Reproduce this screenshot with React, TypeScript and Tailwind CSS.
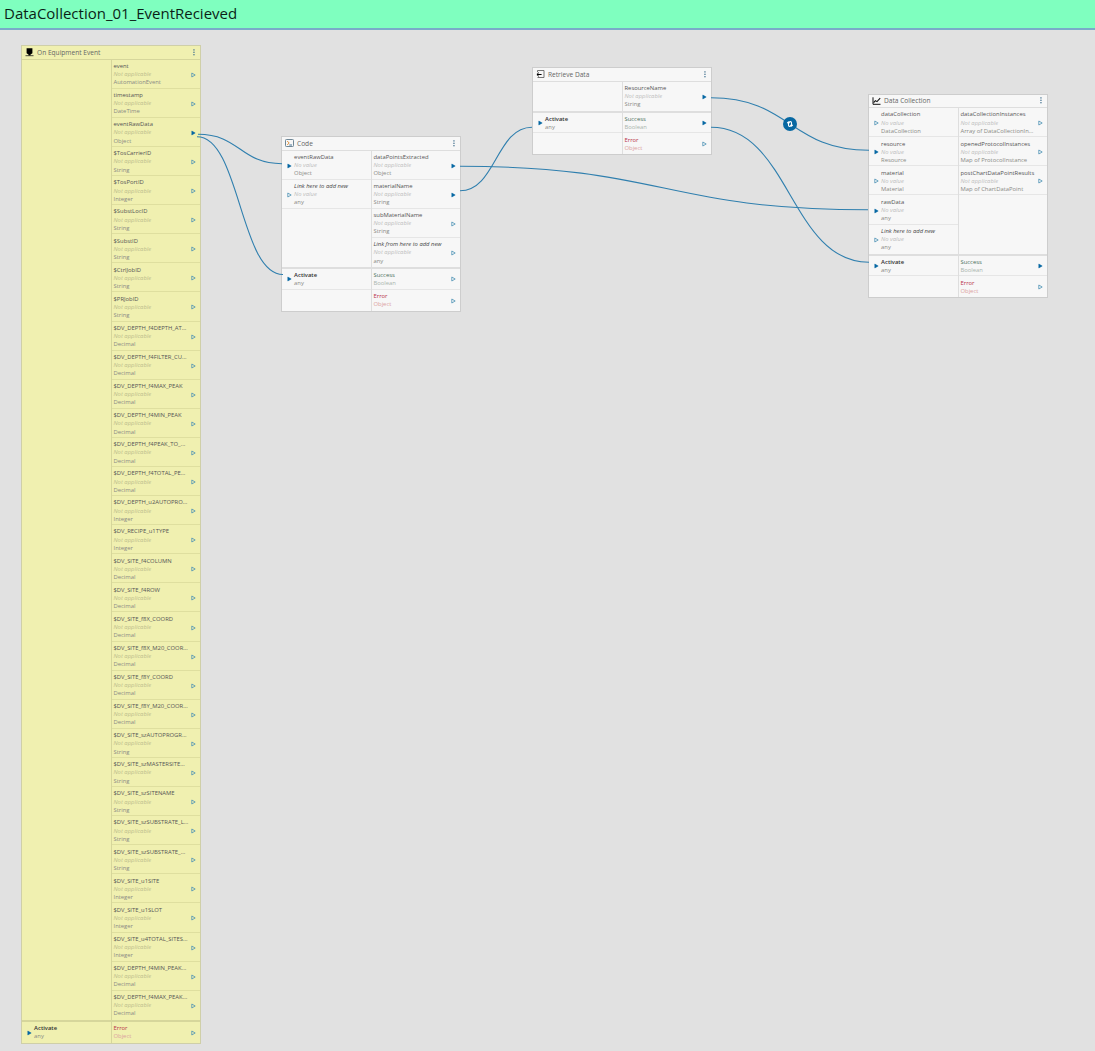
import React from "react";

type Port = { n: string; v?: string; t: string; on?: boolean; kind?: "link" | "act" | "ok" | "err" };
const NA = "Not applicable";

function Arrow({ on }: { on?: boolean }) {
  return (
    <svg width="5" height="6" viewBox="0 0 5 6" className="shrink-0">
      <path d="M0.8 1 L4.2 3 L0.8 5 Z" fill={on ? "#0467a3" : "none"} stroke={on ? "#0467a3" : "#4a90b4"} strokeWidth={on ? 0.5 : 0.8} />
    </svg>
  );
}

function Cell({ p, side, yellow, last, short }: { p: Port; side: "in" | "out"; yellow?: boolean; last?: boolean; short?: boolean }) {
  const line = yellow ? "border-[#dfdf9f]" : "border-[#e6e6e6]";
  const h = short ? "h-[20.8px]" : "h-[29.1px]";
  const kind = p.kind;
  const nameColor =
    kind === "err" ? "text-[#b8354a]" : kind === "ok" ? "text-[#4b6f5c]" : kind === "link" ? "italic text-[#444]" : kind === "act" ? "font-semibold text-[#333]" : "text-[#555]";
  const typeColor = kind === "err" ? "text-[#dba0a0]" : kind === "ok" ? "text-[#a9b5ad]" : "text-[#8a8a85]";
  return (
    <div className={`flex shrink-0 ${h} ${last ? "" : "border-b"} ${line} ${side === "in" ? "pl-[4.8px]" : "pl-[2px] pr-[4px]"}`}>
      {side === "in" && (
        <div className={`flex w-[7.3px] items-center ${short ? "pt-[1px]" : "pt-[2px]"}`}>
          <Arrow on={p.on} />
        </div>
      )}
      <div className="flex min-w-0 flex-1 flex-col whitespace-nowrap pt-[2.3px] text-[5.86px] leading-[8.2px]">
        <span className={nameColor}>{p.n}</span>
        {p.v && <span className={`italic ${yellow ? "text-[#bcbc8c]" : "text-[#bdbdbd]"}`}>{p.v}</span>}
        <span className={typeColor}>{p.t}</span>
      </div>
      {side === "out" && (
        <div className={`flex items-center ${short ? "pt-[1px]" : "pt-[2px]"}`}>
          <Arrow on={p.on} />
        </div>
      )}
    </div>
  );
}

type NodeProps = {
  title: string;
  icon: React.ReactNode;
  place: string;
  ins: Port[];
  outs: Port[];
  act: Port[];
  res: Port[];
  yellow?: boolean;
};

function FlowNode({ title, icon, place, ins, outs, act, res, yellow }: NodeProps) {
  const line = yellow ? "border-[#d6d69b]" : "border-[#dedede]";
  return (
    <section
      className={`absolute flex w-[180px] flex-col border ${place} ${yellow ? "border-[#cfcfa8] bg-[#f0f0b0]" : "border-[#cdcdcd] bg-[#f7f7f7]"}`}
    >
      <header className={`flex h-[13.6px] shrink-0 items-center border-b pl-[3px] pr-[5px] ${line}`}>
        {icon}
        <span className="ml-[3px] flex-1 whitespace-nowrap pt-[1px] text-[6.6px] leading-[10px] text-[#666]">{title}</span>
        <svg width="2" height="7" viewBox="0 0 2 7" fill="#3d6d8c">
          <rect x="0.3" y="0.3" width="1.3" height="1.2" />
          <rect x="0.3" y="2.7" width="1.3" height="1.2" />
          <rect x="0.3" y="5.1" width="1.3" height="1.2" />
        </svg>
      </header>
      <div className="flex">
        <div className={`flex w-[89.5px] flex-col border-r ${line}`}>
          {ins.map((p, i) => (
            <Cell key={i} p={p} side="in" yellow={yellow} last={i === 4} />
          ))}
        </div>
        <div className="flex min-w-0 flex-1 flex-col">
          {outs.map((p, i) => (
            <Cell key={i} p={p} side="out" yellow={yellow} last={i === outs.length - 1 && outs.length >= ins.length} />
          ))}
        </div>
      </div>
      <div className={`flex border-t-2 ${line}`}>
        <div className={`w-[89.5px] border-r ${line}`}>
          {act.map((p, i) => (
            <Cell key={i} p={p} side="in" yellow={yellow} short last={res.length === 1} />
          ))}
        </div>
        <div className="min-w-0 flex-1">
          {res.map((p, i) => (
            <Cell key={i} p={p} side="out" yellow={yellow} short last={i === res.length - 1} />
          ))}
        </div>
      </div>
    </section>
  );
}

const eventPorts: [string, string][] = [
  ["event", "AutomationEvent"],
  ["timestamp", "DateTime"],
  ["eventRawData", "Object"],
  ["$TosCarrierID", "String"],
  ["$TosPortID", "Integer"],
  ["$SubstLocID", "String"],
  ["$SubstID", "String"],
  ["$CtrlJobID", "String"],
  ["$PRJobID", "String"],
  ["$DV_DEPTH_f4DEPTH_AT...", "Decimal"],
  ["$DV_DEPTH_f4FILTER_CU...", "Decimal"],
  ["$DV_DEPTH_f4MAX_PEAK", "Decimal"],
  ["$DV_DEPTH_f4MIN_PEAK", "Decimal"],
  ["$DV_DEPTH_f4PEAK_TO_...", "Decimal"],
  ["$DV_DEPTH_f4TOTAL_PE...", "Decimal"],
  ["$DV_DEPTH_u2AUTOPRO...", "Integer"],
  ["$DV_RECIPE_u1TYPE", "Integer"],
  ["$DV_SITE_f4COLUMN", "Decimal"],
  ["$DV_SITE_f4ROW", "Decimal"],
  ["$DV_SITE_f8X_COORD", "Decimal"],
  ["$DV_SITE_f8X_M20_COOR...", "Decimal"],
  ["$DV_SITE_f8Y_COORD", "Decimal"],
  ["$DV_SITE_f8Y_M20_COOR...", "Decimal"],
  ["$DV_SITE_szAUTOPROGR...", "String"],
  ["$DV_SITE_szMASTERSITE...", "String"],
  ["$DV_SITE_szSITENAME", "String"],
  ["$DV_SITE_szSUBSTRATE_L...", "String"],
  ["$DV_SITE_szSUBSTRATE_...", "String"],
  ["$DV_SITE_u1SITE", "Integer"],
  ["$DV_SITE_u1SLOT", "Integer"],
  ["$DV_SITE_u4TOTAL_SITES...", "Integer"],
  ["$DV_DEPTH_f4MIN_PEAK...", "Decimal"],
  ["$DV_DEPTH_f4MAX_PEAK...", "Decimal"],
];

const out = (n: string, t: string, on?: boolean, kind?: Port["kind"]): Port => ({ n, v: NA, t, on, kind });
const inp = (n: string, t: string, on?: boolean, kind?: Port["kind"]): Port => ({ n, v: "No value", t, on, kind });
const activate: Port[] = [{ n: "Activate", t: "any", on: true, kind: "act" }];
const error: Port = { n: "Error", t: "Object", kind: "err" };
const success = (on?: boolean): Port => ({ n: "Success", t: "Boolean", on, kind: "ok" });

export default function App() {
  return (
    <div className="flex h-[1051px] w-[1095px] flex-col overflow-hidden bg-[#e1e1e1] font-['Open_Sans',sans-serif]">
      <div className="flex h-[30px] shrink-0 items-center border-b-2 border-[#79abc9] bg-[#7fffbf] pb-[2px] pl-[4px]">
        <h1 className="whitespace-nowrap text-[15px] leading-5 text-[#0b1f17]">DataCollection_01_EventRecieved</h1>
      </div>
      <main className="relative flex-1">
        <FlowNode
          yellow
          place="left-[21px] top-[15.1px]"
          title="On Equipment Event"
          icon={
            <svg width="9" height="9" viewBox="0 0 9 9">
              <path d="M1.6 0.3h5.8v5L5.5 6.4v1h-2v-1L1.6 5.3Z" fill="#000" />
              <path d="M0.5 7.7h8" stroke="#222" strokeWidth="0.8" />
            </svg>
          }
          ins={[]}
          outs={eventPorts.map(([n, t]) => out(n, t, n === "eventRawData"))}
          act={activate}
          res={[error]}
        />
        <FlowNode
          place="left-[281px] top-[106px]"
          title="Code"
          icon={
            <svg width="9" height="8" viewBox="0 0 9 8" fill="none">
              <rect x="0.5" y="0.5" width="8" height="7" rx="0.8" stroke="#6f8796" strokeWidth="1" />
              <path d="M2.2 2 L4.2 4 L2.2 6" stroke="#e0913c" strokeWidth="1" />
              <path d="M4.3 6h2.7" stroke="#33658a" strokeWidth="0.9" />
            </svg>
          }
          ins={[inp("eventRawData", "Object", true), inp("Link here to add new", "any", false, "link")]}
          outs={[
            out("dataPointsExtracted", "Object", true),
            out("materialName", "String", true),
            out("subMaterialName", "String"),
            out("Link from here to add new", "any", false, "link"),
          ]}
          act={activate}
          res={[success(), error]}
        />
        <FlowNode
          place="left-[532px] top-[37px]"
          title="Retrieve Data"
          icon={
            <svg width="9" height="8" viewBox="0 0 9 8" fill="none">
              <path d="M1.5 2.2V0.5h6.5v7H1.5" stroke="#666" strokeWidth="0.9" />
              <path d="M5.6 4.5H1M2.8 2.7L0.9 4.5l1.9 1.8" stroke="#000" strokeWidth="1" />
            </svg>
          }
          ins={[]}
          outs={[out("ResourceName", "String", true)]}
          act={activate}
          res={[success(true), error]}
        />
        <FlowNode
          place="left-[868px] top-[63.6px]"
          title="Data Collection"
          icon={
            <svg width="9" height="8" viewBox="0 0 9 8" fill="none">
              <path d="M1 0.3v7h7.5" stroke="#111" strokeWidth="1" />
              <path d="M1.6 5.7L3.4 3.6l1.6 1L8.2 1.2" stroke="#111" strokeWidth="1.1" />
            </svg>
          }
          ins={[
            inp("dataCollection", "DataCollection"),
            inp("resource", "Resource", true),
            inp("material", "Material"),
            inp("rawData", "any", true),
            inp("Link here to add new", "any", false, "link"),
          ]}
          outs={[
            out("dataCollectionInstances", "Array of DataCollectionIn..."),
            out("openedProtocolInstances", "Map of ProtocolInstance"),
            out("postChartDataPointResults", "Map of ChartDataPoint"),
          ]}
          act={activate}
          res={[success(true), error]}
        />
        <svg className="pointer-events-none absolute left-0 top-0" width="1095" height="1021" viewBox="0 30 1095 1021" fill="none" stroke="#2f7fae" strokeWidth="1.1">
          <path d="M198 134.3C240 134.3 240 163.7 282 163.7" />
          <path d="M197 136.8C240 136.8 240 274.5 283 274.5" />
          <path d="M460 166.3C664 166.3 664 209.8 868 209.8" />
          <path d="M460 190.8C496 190.8 496 127.2 532 127.2" />
          <path d="M711 97.7C790 97.7 790 150.3 869 150.3" />
          <path d="M711 127.2C790 127.2 790 262.2 869 262.2" />
          <circle cx="790" cy="124" r="7" fill="#0768a2" stroke="none" />
          <g stroke="#fff" strokeWidth="1.1" strokeLinejoin="round">
            <path d="M787.2 123.2l1.3-1.4 1.2 1.2M788.5 122v3.2q0 1.2 1.2 1.2h1" />
            <path d="M792.8 124.8l-1.3 1.4-1.2-1.2M791.5 126v-3.2q0-1.2-1.2-1.2h-1" />
          </g>
        </svg>
      </main>
    </div>
  );
}
